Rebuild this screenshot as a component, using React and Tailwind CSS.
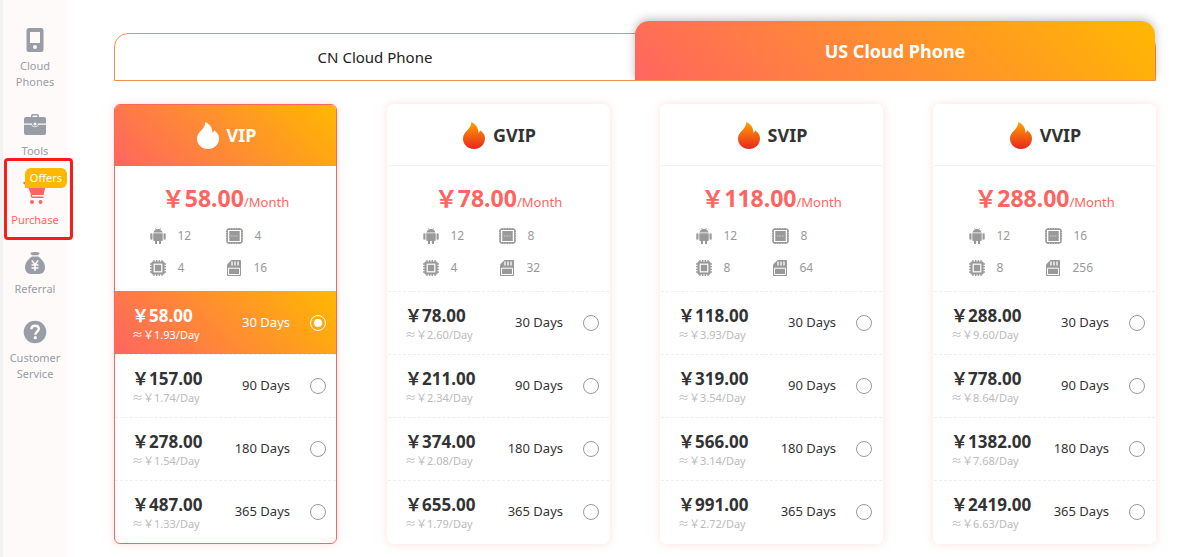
import { useState } from 'react';

const OPTION_DAYS = [30, 90, 180, 365];

const PLANS = [
    { name: 'VIP', price: '58.00', android: 12, ram: 4, cpu: 4, storage: 16, options: [['58.00', '1.93'], ['157.00', '1.74'], ['278.00', '1.54'], ['487.00', '1.33']] },
    { name: 'GVIP', price: '78.00', android: 12, ram: 8, cpu: 4, storage: 32, options: [['78.00', '2.60'], ['211.00', '2.34'], ['374.00', '2.08'], ['655.00', '1.79']] },
    { name: 'SVIP', price: '118.00', android: 12, ram: 8, cpu: 8, storage: 64, options: [['118.00', '3.93'], ['319.00', '3.54'], ['566.00', '3.14'], ['991.00', '2.72']] },
    { name: 'VVIP', price: '288.00', android: 12, ram: 16, cpu: 8, storage: 256, options: [['288.00', '9.60'], ['778.00', '8.64'], ['1382.00', '7.68'], ['2419.00', '6.63']] },
];

const PhoneIcon = () => (
    <svg width="24" height="24" viewBox="0 0 24 24" fill="currentColor" fillRule="evenodd" aria-hidden="true">
        <path d="M6 0h12a2.500 2.500 0 0 1 2.500 2.500v19a2.500 2.500 0 0 1-2.500 2.500H6a2.500 2.500 0 0 1-2.500-2.500v-19A2.500 2.500 0 0 1 6 0zM7 4v11h10V4zM12 17a2 2 0 1 0 0 4 2 2 0 0 0 0-4z" />
    </svg>
);

const ToolsIcon = () => (
    <svg width="24" height="24" viewBox="0 0 24 24" fill="currentColor" aria-hidden="true">
        <path fillRule="evenodd" d="M8 4V3a2 2 0 0 1 2-2h4a2 2 0 0 1 2 2v1h5a2 2 0 0 1 2 2v4.500h-8a3 3 0 0 1-6 0H1V6a2 2 0 0 1 2-2zM9.500 4h5V3.200a.7.7 0 0 0-.7-.7h-3.600a.7.7 0 0 0-.7.7zM12 9.500a1.500 1.500 0 1 0 0 3 1.500 1.500 0 0 0 0-3z" />
        <path d="M1 11.700h7.300a4 4 0 0 0 7.400 0H23V20a2 2 0 0 1-2 2H3a2 2 0 0 1-2-2z" />
    </svg>
);

const CartIcon = () => (
    <svg width="24" height="24" viewBox="0 2 24 24" fill="currentColor" aria-hidden="true">
        <circle cx="1.800" cy="3" r="1.500" />
        <path d="M1.500 2h3l1.200 2.500H23l-2.500 10.500H8.200L3.800 4H1.500z" />
        <path d="M7.300 15h1.500l.6 1.500H20.500V18H8.600z" />
        <circle cx="9" cy="22" r="2" />
        <circle cx="17.500" cy="22" r="2" />
    </svg>
);

const ReferralIcon = () => (
    <svg width="24" height="24" viewBox="0 0 24 24" fill="currentColor" aria-hidden="true">
        <path d="M8 1.500c2.500-.8 6-.8 8 0 .8.300.6 1 .2 1.400L15 4.200H9L7.800 2.900C7.400 2.500 7.300 1.800 8 1.500z" />
        <path d="M9 5.500h6c4 2.500 7 6.500 7 10.800C22 20.500 19.500 23 16 23H8c-3.500 0-6-2.500-6-6.700C2 12 5 8 9 5.500z" />
        <path d="M8.800 9.500l3.200 4 3.200-4M12 13.500V20M8.500 14h7M8.500 17h7" fill="none" stroke="#fffafa" strokeWidth="1.500" />
    </svg>
);

const HelpIcon = () => (
    <svg width="24" height="24" viewBox="0 0 24 24" fill="currentColor" aria-hidden="true">
        <circle cx="12" cy="12" r="11.300" />
        <path d="M8.300 9.300C8.400 6.900 9.900 5.700 12 5.700s3.800 1.200 3.800 3.200c0 2.700-3.500 2.900-3.500 5.900" fill="none" stroke="#fffafa" strokeWidth="2.400" />
        <circle cx="12.300" cy="17.700" r="1.600" fill="#fffafa" />
    </svg>
);

const FlameIcon = ({ active }) => (
    <svg width="22" height="27" viewBox="0 0 22 27" aria-hidden="true">
        <defs>
            <linearGradient id="flame" x1="0" y1="0" x2="0" y2="1">
                <stop offset="0" stopColor="#ffa200" />
                <stop offset="1" stopColor="#e8261f" />
            </linearGradient>
        </defs>
        <path fill={active ? '#fff' : 'url(#flame)'} d="M8.300 0c4 1.700 7.200 5.500 7.200 11 .8-.6 1.400-1.600 1.600-2.800 2.900 2.100 4.900 4.600 4.900 8C22 22.500 17.200 27 11 27S0 22.500 0 16.500c0-4 2.200-6.200 4.600-8.600C6.700 5.700 8.300 3.500 8.300 0z" />
    </svg>
);

const AndroidIcon = () => (
    <svg width="16" height="16" viewBox="0 0 16 16" fill="#999" aria-hidden="true">
        <path d="M3.500 4.600C3.800 3 4.800 2 6 1.500L5 .3l.5-.3 1.100 1.200a5 5 0 0 1 2.800 0L10.500 0l.5.300-1 1.200c1.200.5 2.200 1.500 2.500 3.100z" />
        <path d="M3.300 5.300h9.400V12a1 1 0 0 1-1 1H11v3H9v-3H7v3H5v-3h-.7a1 1 0 0 1-1-1z" />
        <rect x="0.300" y="5.300" width="2.200" height="6.500" rx="1.100" />
        <rect x="13.500" y="5.300" width="2.200" height="6.500" rx="1.100" />
    </svg>
);

const RamIcon = () => (
    <svg width="17" height="16" viewBox="0 0 17 16" aria-hidden="true">
        <rect x="1.200" y="1.200" width="14.600" height="13.600" rx="1" fill="none" stroke="#999" strokeWidth="1.400" />
        <path d="M2.500.5h12M2.500 15.500h12M.5 2.500v11M16.500 2.500v11" stroke="#999" strokeDasharray="1.500 1" />
        <rect x="3.300" y="3" width="10.400" height="10" fill="#999" />
        <path d="M5 8h7" stroke="#ccc" strokeDasharray="1 .6" />
    </svg>
);

const CpuIcon = () => (
    <svg width="16" height="16" viewBox="0 0 16 16" aria-hidden="true">
        <path d="M4 0v16M6.700 0v16M9.300 0v16M12 0v16M0 4h16M0 6.700h16M0 9.300h16M0 12h16" stroke="#999" strokeWidth="1.300" />
        <rect x="1.500" y="1.500" width="13" height="13" rx="1" fill="#999" />
        <rect x="4.200" y="4.200" width="7.600" height="7.600" fill="#999" stroke="#fff" strokeWidth="1.200" />
    </svg>
);

const StorageIcon = () => (
    <svg width="16" height="16" viewBox="0 0 16 16" aria-hidden="true">
        <path d="M5.500 0H14a1 1 0 0 1 1 1v14a1 1 0 0 1-1 1H2a1 1 0 0 1-1-1V4.500z" fill="#999" />
        <path d="M6 1.500v4M9 1.500v4M12 1.500v4" stroke="#fff" strokeWidth="1.300" />
        <path d="M2.500 14.500V8.200h11v6.300z" fill="none" stroke="#fff" />
    </svg>
);

const NAV = [
    { label: 'Cloud Phones', icon: PhoneIcon },
    { label: 'Tools', icon: ToolsIcon },
    { label: 'Purchase', icon: CartIcon, badge: 'Offers' },
    { label: 'Referral', icon: ReferralIcon },
    { label: 'Customer Service', icon: HelpIcon },
];

function Sidebar() {
    return (
        <nav className="w-[67px] shrink-0 border-l-3 border-[#f2f2f3] bg-[#fffafa] pt-7 flex flex-col gap-[23px]">
            {NAV.map(({ label, icon: Icon, badge }) => (
                <a
                    key={label}
                    href="#"
                    className={`relative flex flex-col items-center gap-1.5 text-center text-[11px] leading-4 ${badge ? 'text-[#ff6560]' : 'text-[#999da5]'}`}
                >
                    <Icon />
                    <span className="px-1">{label}</span>
                    {badge && (
                        <>
                            <span className="absolute -top-3.5 right-0 rounded-t-md rounded-br-md bg-[#ffb800] px-[5px] leading-5 text-white">{badge}</span>
                            <span className="absolute -top-6 -bottom-3 left-px -right-1.5 rounded-sm border-3 border-[#ff1a1a]" />
                        </>
                    )}
                </a>
            ))}
        </nav>
    );
}

function PlanCard({ plan, selected, onSelect }) {
    const active = selected.startsWith(`${plan.name}-`);

    return (
        <section className={`overflow-hidden rounded-md border bg-white shadow-[0_0_10px_rgba(255,101,96,0.2)] ${active ? 'border-[#ff6560]' : 'border-white'}`}>
            <h2 className={`flex h-[61px] items-center justify-center gap-2 border-b pl-0.5 text-lg font-bold ${active ? 'border-transparent bg-linear-[45deg,#ff6560,#ffb800] bg-origin-border text-white' : 'border-[#f2f2f2] text-[#333]'}`}>
                <FlameIcon active={active} />
                {plan.name}
            </h2>

            <div className="h-[125px] pt-4">
                <p className="text-center text-[13px] leading-8 text-[#ff6560]">
                    <span className="text-[23px] leading-8 font-bold">￥{plan.price}</span>/Month
                </p>
                <ul className="mx-auto mt-0.5 grid w-[152px] grid-cols-2 text-xs leading-8 text-[#999]">
                    <li className="flex items-center gap-3"><AndroidIcon />{plan.android}</li>
                    <li className="flex items-center gap-3"><RamIcon />{plan.ram}</li>
                    <li className="flex items-center gap-3"><CpuIcon />{plan.cpu}</li>
                    <li className="flex items-center gap-3"><StorageIcon />{plan.storage}</li>
                </ul>
            </div>

            {plan.options.map(([price, daily], i) => {
                const id = `${plan.name}-${OPTION_DAYS[i]}`;
                const checked = selected === id;
                return (
                    <label
                        key={id}
                        className={`flex h-[63px] cursor-pointer items-center border-t border-dashed pr-2.5 pl-[17px] ${checked ? 'border-transparent bg-linear-[45deg,#ff6560,#ffb800] bg-origin-border text-white' : 'border-[#eee] text-[#333]'}`}
                    >
                        <span className="flex-1 pt-1 whitespace-nowrap">
                            <span className="block text-[17px] leading-5 font-bold">￥{price}</span>
                            <span className={`block text-[11px] leading-[18px] ${checked ? 'text-white' : 'text-[#bbb]'}`}>≈￥{daily}/Day</span>
                        </span>
                        <span className="text-[13px] whitespace-nowrap">{OPTION_DAYS[i]} Days</span>
                        <input
                            type="radio"
                            name="plan"
                            checked={checked}
                            onChange={() => onSelect(id)}
                            className="ml-5 size-4 appearance-none rounded-full border border-[#999] checked:border-white checked:bg-white checked:bg-clip-content checked:p-[3px]"
                        />
                    </label>
                );
            })}
        </section>
    );
}

export default function App() {
    const [region, setRegion] = useState('US');
    const [selected, setSelected] = useState('VIP-30');

    return (
        <div className="flex min-h-screen bg-white font-['Noto_Sans','Noto_Sans_CJK_SC',sans-serif]">
            <Sidebar />
            <main className="flex-1 pt-[33px] pr-[38px] pb-3 pl-[47px]">
                {/* Region tabs */}
                <div className="flex h-12 items-end rounded-t-[14px] border border-[#f58f4c]">
                    {['CN', 'US'].map((r) => (
                        <button
                            key={r}
                            type="button"
                            onClick={() => setRegion(r)}
                            className={`flex-1 ${region === r ? 'h-[59px] rounded-t-[14px] bg-linear-[45deg,#ff6560,#ffb800] text-lg font-bold text-white shadow-[0_-2px_10px_rgba(0,0,0,0.25)] [clip-path:inset(-16px_-16px_0_-16px)]' : 'h-full text-[15px] text-[#222]'}`}
                        >
                            {r} Cloud Phone
                        </button>
                    ))}
                </div>

                <div className="mt-[23px] grid grid-cols-4 gap-[50px]">
                    {PLANS.map((plan) => (
                        <PlanCard key={plan.name} plan={plan} selected={selected} onSelect={setSelected} />
                    ))}
                </div>
            </main>
        </div>
    );
}
